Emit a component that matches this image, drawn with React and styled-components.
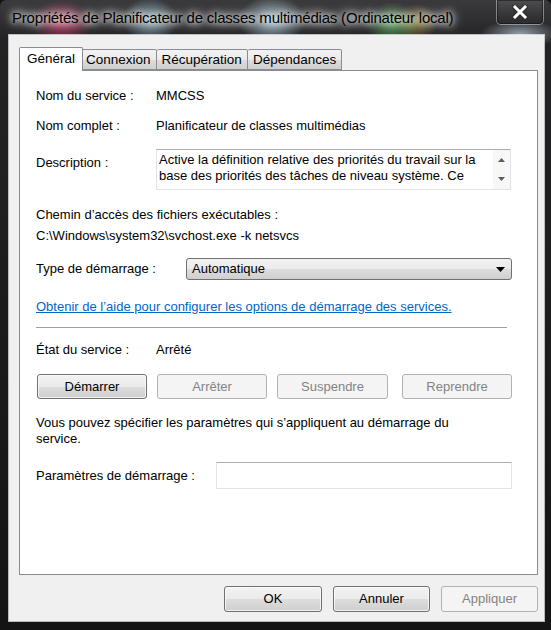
import styled, { createGlobalStyle } from "styled-components";

const GlobalStyle = createGlobalStyle`
  html, body {
    margin: 0;
    padding: 0;
    background: #111;
  }
  * {
    box-sizing: border-box;
  }
`;

const FONT = `"Liberation Sans", Arial, sans-serif`;

export default function App() {
  return (
    <>
      <GlobalStyle />
      <Window>
        <TitleBar>
          <Title>Propriétés de Planificateur de classes multimédias (Ordinateur local)</Title>
          <CloseButton>
            <svg width="16" height="14" viewBox="0 0 16 14">
              <path d="M3 2 L13 12 M13 2 L3 12" stroke="#2a2a2a" strokeWidth="5" strokeLinecap="square" />
              <path d="M3 2 L13 12 M13 2 L3 12" stroke="#fff" strokeWidth="3" strokeLinecap="square" />
            </svg>
          </CloseButton>
        </TitleBar>

        <Client>
          <TabStrip>
            <Tab $active>Général</Tab>
            <Tab>Connexion</Tab>
            <Tab>Récupération</Tab>
            <Tab>Dépendances</Tab>
          </TabStrip>

          <Panel>
            <Row $mt={17}>
              <Label $w={120}>Nom du service :</Label>
              <Value>MMCSS</Value>
            </Row>
            <Row $mt={14}>
              <Label $w={120}>Nom complet :</Label>
              <Value>Planificateur de classes multimédias</Value>
            </Row>
            <Row $mt={15} $top>
              <Label $w={120} $pt={6}>Description :</Label>
              <DescBox>
                <DescText>
                  <Value>Active la définition relative des priorités du travail sur la</Value>
                  <Value>base des priorités des tâches de niveau système. Ce</Value>
                </DescText>
                <ScrollBar>
                  <svg width="7" height="4" viewBox="0 0 7 4">
                    <path d="M0 4 L3.5 0 L7 4 Z" fill="#5d5d5d" />
                  </svg>
                  <svg width="7" height="4" viewBox="0 0 7 4">
                    <path d="M0 0 L7 0 L3.5 4 Z" fill="#5d5d5d" />
                  </svg>
                </ScrollBar>
              </DescBox>
            </Row>
            <Line $mt={17}>Chemin d’accès des fichiers exécutables :</Line>
            <Line $mt={5}>C:\Windows\system32\svchost.exe -k netsvcs</Line>
            <Row $mt={14}>
              <Label $w={150}>Type de démarrage :</Label>
              <Combo>
                <span>Automatique</span>
                <svg width="9" height="5" viewBox="0 0 9 5">
                  <path d="M0 0 L9 0 L4.5 5 Z" fill="#000" />
                </svg>
              </Combo>
            </Row>
            <Link $mt={19}>Obtenir de l’aide pour configurer les options de démarrage des services.</Link>
            <Separator />
            <Row $mt={13}>
              <Label $w={120}>État du service :</Label>
              <Value>Arrêté</Value>
            </Row>
            <ButtonRow>
              <Button $w={110}>Démarrer</Button>
              <Button $w={110} disabled>Arrêter</Button>
              <Button $w={111} disabled>Suspendre</Button>
              <Button $w={110} disabled $push>Reprendre</Button>
            </ButtonRow>
            <Paragraph>
              Vous pouvez spécifier les paramètres qui s’appliquent au démarrage du
              <br />
              service.
            </Paragraph>
            <Row $mt={15}>
              <Label $w={180}>Paramètres de démarrage :</Label>
              <TextInput />
            </Row>
          </Panel>

          <DialogButtons>
            <Button $w={98} $h={26}>OK</Button>
            <Button $w={97} $h={26}>Annuler</Button>
            <Button $w={97} $h={26} disabled>Appliquer</Button>
          </DialogButtons>
        </Client>
      </Window>
    </>
  );
}

const Window = styled.div`
  width: 551px;
  height: 630px;
  display: flex;
  flex-direction: column;
  padding: 0 7px 9px 9px;
  font-family: ${FONT};
  background:
    radial-gradient(ellipse 30px 22px at 62px 22px, rgba(220, 60, 110, 0.75), transparent),
    radial-gradient(ellipse 28px 22px at 150px 20px, rgba(170, 215, 235, 0.7), transparent),
    radial-gradient(ellipse 34px 24px at 272px 20px, rgba(200, 235, 250, 0.75), transparent),
    radial-gradient(ellipse 26px 22px at 392px 24px, rgba(90, 180, 90, 0.7), transparent),
    radial-gradient(ellipse 22px 18px at 416px 22px, rgba(220, 190, 70, 0.55), transparent),
    radial-gradient(ellipse 40px 14px at 520px 34px, rgba(220, 235, 255, 0.6), transparent),
    linear-gradient(180deg, #3a3a3c 0%, #232325 40px, #141414 100%);
  border-radius: 6px 6px 0 0;
`;

const TitleBar = styled.div`
  height: 35px;
  display: flex;
  align-items: flex-start;
  padding-left: 3px;
`;

const Title = styled.div`
  margin-top: 9px;
  font-size: 15px;
  line-height: 18px;
  letter-spacing: -0.2px;
  color: #000;
  white-space: nowrap;
  text-shadow: 0 0 6px #fff, 0 0 10px rgba(255, 255, 255, 0.9), 0 0 14px rgba(255, 255, 255, 0.8);
`;

const CloseButton = styled.div`
  margin-left: auto;
  width: 48px;
  height: 25px;
  display: flex;
  align-items: center;
  justify-content: center;
  border: 1px solid rgba(200, 200, 200, 0.55);
  border-top: none;
  border-radius: 0 0 5px 5px;
  background: linear-gradient(180deg, rgba(90, 90, 92, 0.6), rgba(40, 40, 42, 0.8));
  box-shadow: inset 0 0 0 1px rgba(0, 0, 0, 0.4);
`;

const Client = styled.div`
  flex: 1;
  display: flex;
  flex-direction: column;
  background: #f0f0f0;
  outline: 1px solid rgba(255, 255, 255, 0.7);
  padding: 11px 6px 9px 10px;
  font-size: 13px;
  color: #000;
`;

const TabStrip = styled.div`
  display: flex;
  align-items: flex-end;
  height: 24px;
  padding-left: 2px;
  position: relative;
  z-index: 1;
`;

const Tab = styled.div`
  height: ${(p) => (p.$active ? "24px" : "21px")};
  padding: ${(p) => (p.$active ? "3px 7px 0" : "2px 5px 0")};
  margin: ${(p) => (p.$active ? "0 -2px -1px -2px" : "0")};
  font-size: 13.5px;
  line-height: 16px;
  border: 1px solid #898c95;
  border-bottom: ${(p) => (p.$active ? "none" : "1px solid #898c95")};
  border-left: ${(p) => (p.$active ? "1px solid #898c95" : "none")};
  border-radius: 2px 2px 0 0;
  background: ${(p) =>
    p.$active ? "#fff" : "linear-gradient(180deg, #f2f2f2 0%, #ebebeb 50%, #dddddd 51%, #cfcfcf 100%)"};
  position: relative;
  z-index: ${(p) => (p.$active ? 2 : 1)};

  &:first-child {
    border-left: 1px solid #898c95;
  }
`;

const Panel = styled.div`
  flex: 1;
  display: flex;
  flex-direction: column;
  background: #fff;
  border: 1px solid #898c95;
  padding: 0 25px 0 16px;
`;

const Row = styled.div`
  display: flex;
  align-items: ${(p) => (p.$top ? "flex-start" : "center")};
  margin-top: ${(p) => p.$mt}px;
`;

const Label = styled.div`
  width: ${(p) => p.$w}px;
  flex-shrink: 0;
  line-height: 16px;
  padding-top: ${(p) => p.$pt || 0}px;
  white-space: nowrap;
`;

const Value = styled.div`
  line-height: 16px;
  white-space: nowrap;
`;

const DescBox = styled.div`
  width: 355px;
  height: 41px;
  display: flex;
  border: 1px solid #e2e3ea;
  border-top-color: #abadb3;
  background: #fff;
  overflow: hidden;
`;

const DescText = styled.div`
  flex: 1;
  padding: 2px 0 0 2px;
  overflow: hidden;
`;

const ScrollBar = styled.div`
  width: 17px;
  display: flex;
  flex-direction: column;
  align-items: center;
  justify-content: space-between;
  padding: 8px 0 8px;
  background: #f7f7f7;
`;

const Line = styled.div`
  margin-top: ${(p) => p.$mt}px;
  line-height: 16px;
  white-space: nowrap;
`;

const Combo = styled.div`
  width: 326px;
  height: 22px;
  display: flex;
  align-items: center;
  justify-content: space-between;
  padding: 0 6px 0 5px;
  border: 1px solid #707070;
  border-radius: 3px;
  background: linear-gradient(180deg, #f2f2f2 0%, #ebebeb 50%, #dddddd 51%, #cfcfcf 100%);
  line-height: 16px;
`;

const Link = styled.div`
  margin-top: ${(p) => p.$mt}px;
  line-height: 16px;
  color: #0066cc;
  text-decoration: underline;
  white-space: nowrap;
`;

const Separator = styled.div`
  margin-top: 12px;
  width: 471px;
  height: 2px;
  border-top: 1px solid #a0a0a0;
  border-bottom: 1px solid #fff;
`;

const ButtonRow = styled.div`
  display: flex;
  gap: 10px;
  margin-top: 16px;
  padding-left: 1px;
`;

const Button = styled.div`
  width: ${(p) => p.$w}px;
  height: ${(p) => p.$h || 25}px;
  margin-left: ${(p) => (p.$push ? "auto" : "0")};
  display: flex;
  align-items: center;
  justify-content: center;
  line-height: 16px;
  border-radius: 3px;
  border: 1px solid ${(p) => (p.disabled ? "#adb2b5" : "#707070")};
  color: ${(p) => (p.disabled ? "#838383" : "#000")};
  background: ${(p) =>
    p.disabled
      ? "#f4f4f4"
      : "linear-gradient(180deg, #f2f2f2 0%, #ebebeb 50%, #dddddd 51%, #cfcfcf 100%)"};
  box-shadow: ${(p) => (p.disabled ? "none" : "inset 0 0 0 1px rgba(255, 255, 255, 0.7)")};
`;

const Paragraph = styled.div`
  margin-top: 16px;
  line-height: 16px;
`;

const TextInput = styled.div`
  width: 296px;
  height: 27px;
  border: 1px solid #e2e3ea;
  border-top-color: #abadb3;
  background: #fff;
`;

const DialogButtons = styled.div`
  display: flex;
  justify-content: flex-end;
  gap: 11px;
  margin-top: 11px;
  padding-right: 0;
`;
